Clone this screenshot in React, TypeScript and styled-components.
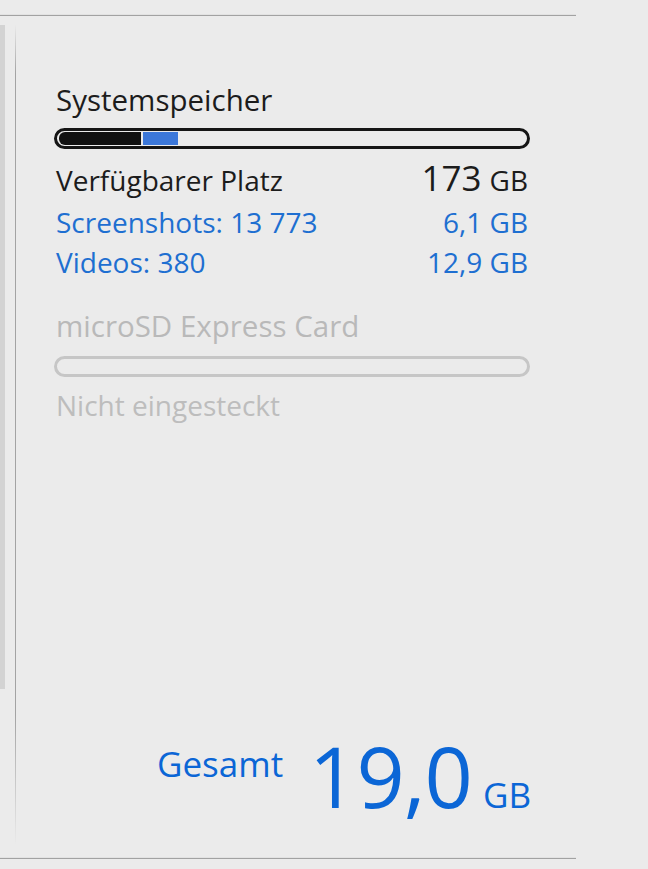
import React from "react";
import styled, { createGlobalStyle } from "styled-components";

const Global = createGlobalStyle`
  html, body { margin: 0; padding: 0; background: #ebebeb; }
  body { font-family: "Open Sans", "Noto Sans", sans-serif; }
  * { box-sizing: border-box; }
`;

const Screen = styled.div`
  width: 648px;
  height: 869px;
  background: #ebebeb;
  display: flex;
  flex-direction: column;
  overflow: hidden;
`;

const Rule = styled.div<{ $top: number }>`
  margin-top: ${(p) => p.$top}px;
  width: 576px;
  height: 2px;
  background: linear-gradient(#e2e2e2 0 50%, #a2a2a2 50% 100%);
  flex-shrink: 0;
`;

const Body = styled.div`
  display: flex;
  height: 839px;
  flex-shrink: 0;
`;

const SideStrip = styled.div`
  width: 5px;
  margin-top: 9px;
  height: 664px;
  background: #d3d3d3;
  flex-shrink: 0;
`;

const Divider = styled.div`
  width: 1px;
  margin-left: 10px;
  margin-top: 8px;
  height: 822px;
  background: linear-gradient(
    #ebebeb 0%,
    #a3a3a3 6%,
    #a3a3a3 84%,
    #ebebeb 100%
  );
  flex-shrink: 0;
`;

const Content = styled.div`
  display: flex;
  flex-direction: column;
  padding: 64px 0 0 38px;
  width: 514px;
`;

const Heading = styled.div<{ $muted?: boolean }>`
  font-size: 29.5px;
  line-height: 40px;
  color: ${(p) => (p.$muted ? "#b9b9b9" : "#1c1c1c")};
  padding-left: 2px;
`;

const Bar = styled.div<{ $muted?: boolean }>`
  margin-top: ${(p) => (p.$muted ? 10 : 8)}px;
  height: 21px;
  border: 3px solid ${(p) => (p.$muted ? "#c6c6c6" : "#151515")};
  border-radius: 12px;
  padding: 1px 2px;
  display: flex;
  gap: 2px;
`;

const Segment = styled.div<{ $color: string }>`
  height: 100%;
  background: ${(p) => p.$color};
  &:first-child {
    border-radius: 6px 0 0 6px;
  }
`;

const Rows = styled.div`
  margin-top: 11px;
  display: flex;
  flex-direction: column;
`;

const Row = styled.div<{ $blue?: boolean; $h: number }>`
  display: flex;
  justify-content: space-between;
  align-items: baseline;
  height: ${(p) => p.$h}px;
  line-height: 40px;
  font-size: 28px;
  color: ${(p) => (p.$blue ? "#1e6fd1" : "#1c1c1c")};
  padding: 0 2px;
`;

const BigNum = styled.span`
  font-size: 35px;
  line-height: 1;
`;

const Unit = styled.span`
  font-size: 28px;
  margin-left: 8px;
`;

const Muted = styled.div`
  font-size: 28px;
  line-height: 36px;
  color: #bdbdbd;
  padding-left: 2px;
  margin-top: 10px;
`;

const Total = styled.div`
  margin-top: auto;
  margin-bottom: 37px;
  margin-right: -1px;
  display: flex;
  justify-content: flex-end;
  align-items: baseline;
  color: #0b66d6;
`;

const TotalLabel = styled.span`
  font-size: 35px;
  margin-right: 26px;
  position: relative;
  top: -31px;
`;

const TotalValue = styled.span`
  font-size: 84.5px;
  line-height: 1;
  letter-spacing: -1px;
`;

const TotalUnit = styled.span`
  font-size: 35px;
  margin-left: 11px;
`;

export default function App() {
  return (
    <Screen>
      <Global />
      <Rule $top={14} />
      <Body>
        <SideStrip />
        <Divider />
        <Content>
          <Heading>Systemspeicher</Heading>
          <Bar>
            <Segment $color="#111111" style={{ width: "17.6%" }} />
            <Segment $color="#3b77d9" style={{ width: "7.5%" }} />
          </Bar>
          <Rows>
            <Row $h={42}>
              <span>Verfügbarer Platz</span>
              <span>
                <BigNum>173</BigNum>
                <Unit>GB</Unit>
              </span>
            </Row>
            <Row $blue $h={40}>
              <span>Screenshots: 13 773</span>
              <span>6,1 GB</span>
            </Row>
            <Row $blue $h={40}>
              <span>Videos: 380</span>
              <span>12,9 GB</span>
            </Row>
          </Rows>
          <Heading $muted style={{ marginTop: 24 }}>
            microSD Express Card
          </Heading>
          <Bar $muted />
          <Muted>Nicht eingesteckt</Muted>
          <Total>
            <TotalLabel>Gesamt</TotalLabel>
            <TotalValue>19,0</TotalValue>
            <TotalUnit>GB</TotalUnit>
          </Total>
        </Content>
      </Body>
      <Rule $top={2} />
    </Screen>
  );
}
